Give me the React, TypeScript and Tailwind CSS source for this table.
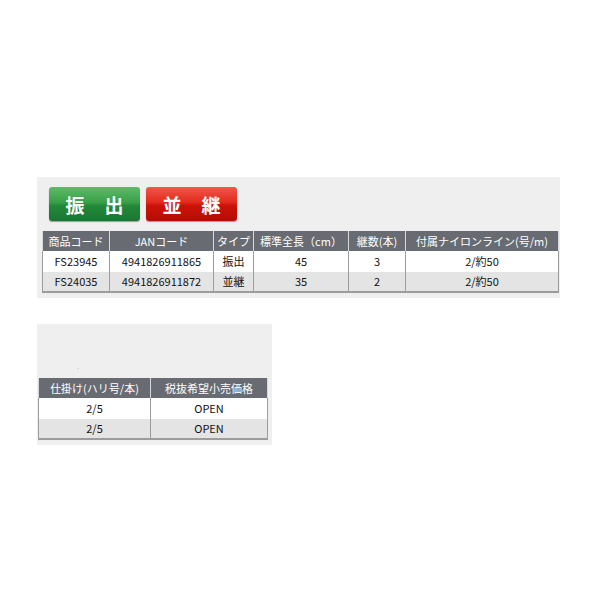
import React from "react";

const font = { fontFamily: '"Noto Sans CJK JP", "Noto Sans", sans-serif' };

function Btn({ a, b, kind }: { a: string; b: string; kind: "g" | "r" }) {
  const cls =
    kind === "g"
      ? "bg-[linear-gradient(to_bottom,#5dbb69_0%,#39a048_45%,#23893a_55%,#1c7532_100%)]"
      : "bg-[linear-gradient(to_bottom,#f0584a_0%,#e22a1c_45%,#cc1208_55%,#b30d04_100%)]";
  return (
    <div
      className={`${cls} w-[91px] h-[34px] rounded-[3px] flex items-center justify-center gap-[20px] text-white font-bold text-[19px] leading-none shadow-[0_1px_1px_rgba(0,0,0,0.35)]`}
    >
      <span>{a}</span>
      <span>{b}</span>
    </div>
  );
}

function Row({
  cells,
  widths,
  head,
  alt,
  last,
}: {
  cells: string[];
  widths: number[];
  head?: boolean;
  alt?: boolean;
  last?: boolean;
}) {
  const bg = head
    ? "bg-[#686b71] text-white h-[20px]"
    : alt
    ? "bg-[#e4e4e4] text-[#111] h-[21px]"
    : "bg-white text-[#111] h-[21px]";
  return (
    <div className={`flex w-fit ${bg} ${last ? "border-b-2 border-[#9c9c9c]" : ""}`}>
      {cells.map((c, i) => (
        <div
          key={i}
          style={{ width: widths[i] }}
          className={`shrink-0 flex items-center justify-center text-[11px] leading-none ${
            head ? "border-r border-[#d8d8d8]" : "border-r border-[#9c9c9c]"
          } ${i === 0 ? (head ? "border-l border-[#d8d8d8]" : "border-l border-[#9c9c9c]") : ""}`}
        >
          {c}
        </div>
      ))}
    </div>
  );
}

export default function App() {
  const w1 = [68, 104, 40, 95, 57, 153];
  const w2 = [113, 117];
  return (
    <div className="w-[600px] h-[600px] bg-white pt-[177px] pl-[37px]" style={font}>
      <div className="w-[523px] h-[121px] bg-[#efefef] pt-[10px]">
        <div className="flex gap-[6px] pl-[12px]">
          <Btn a="振" b="出" kind="g" />
          <Btn a="並" b="継" kind="r" />
        </div>
        <div className="mt-[10px] ml-[5px]">
          <Row head widths={w1} cells={["商品コード", "JANコード", "タイプ", "標準全長（cm）", "継数(本)", "付属ナイロンライン(号/m)"]} />
          <Row widths={w1} cells={["FS23945", "4941826911865", "振出", "45", "3", "2/約50"]} />
          <Row alt last widths={w1} cells={["FS24035", "4941826911872", "並継", "35", "2", "2/約50"]} />
        </div>
      </div>
      <div className="mt-[26px] w-[235px] h-[121px] bg-[#efefef] pt-[38px]">
        <div className="h-[16px] pl-[40px] text-[8px] leading-none text-[#bbb]">.</div>
        <div className="ml-[1px]">
          <Row head widths={w2} cells={["仕掛け(ハリ号/本)", "税抜希望小売価格"]} />
          <Row widths={w2} cells={["2/5", "OPEN"]} />
          <Row alt last widths={w2} cells={["2/5", "OPEN"]} />
        </div>
      </div>
    </div>
  );
}
